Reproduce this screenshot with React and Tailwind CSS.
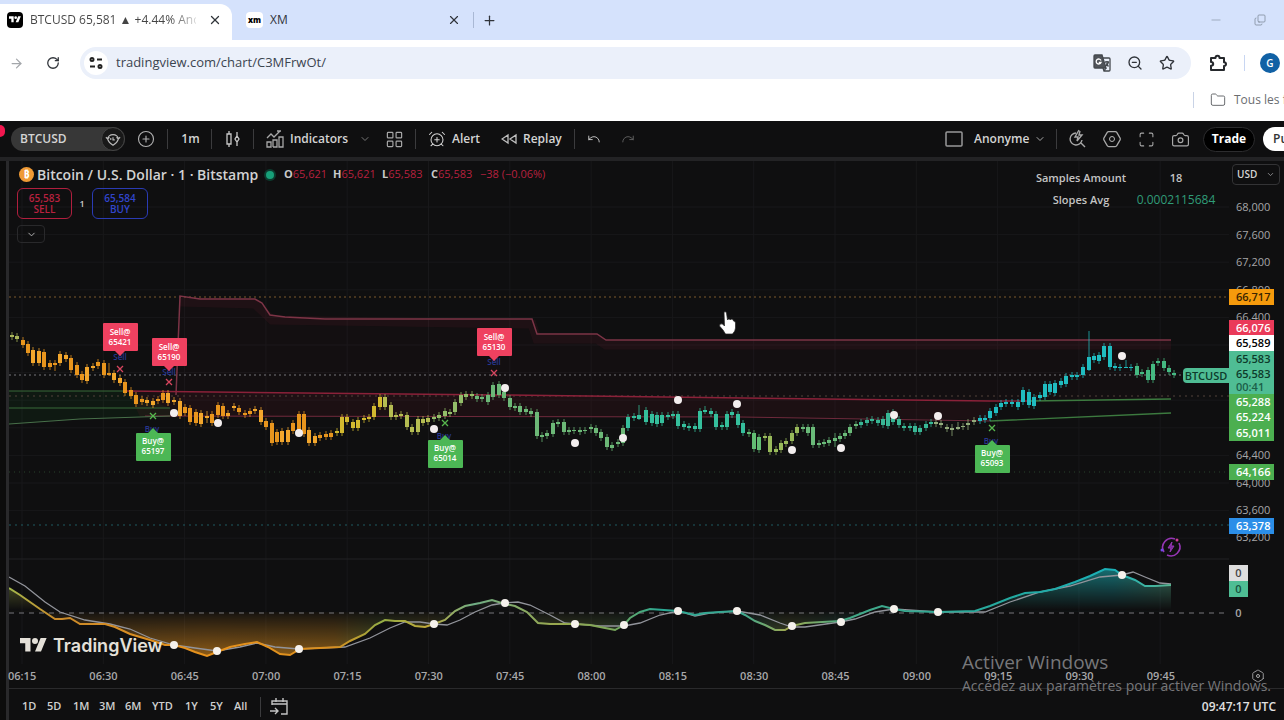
import React from "react";
import {
  AlarmClockPlus, ArrowRight, Camera, ChevronDown, Folder, Hexagon, LayoutGrid, Maximize,
  Minus, Plus, Redo, RotateCw, Search, Star, Undo, X, ZoomOut, Zap, CirclePlus, Copy,
} from "lucide-react";

/* x, body top, body bottom, optional wick top, wick bottom */
const CANDLES = [
  [12,335,337],[17,336,339],[23,340,345],[28,344,353],[33,350,363],[39,351,363],[44,352,367],[50,363,367],[55,363,365,360,371],
  [60,354,363],[66,355,359],[71,358,370],[77,365,375],[82,374,380],[87,367,381],[93,366,368],[98,362,366],[104,363,375],
  [109,373,375,363,376],[114,373,380],[120,378,383],[125,382,393],[131,390,396],[136,395,404],[142,399,402],[147,400,403],
  [153,401,405],[158,399,401],[163,393,400],[168,393,403],[174,400,402],[180,401,416],[185,407,413],[190,408,422],[196,412,423],
  [201,413,424],[207,416,418,411,423],[212,414,423],[218,405,415],[223,406,416],[228,413,416],[234,406,408],[239,408,412],
  [245,413,415],[250,411,414],[255,409,411],[261,410,422],[266,421,427],[272,423,443],[277,432,442],[282,431,442],[288,430,442],
  [293,423,431],[299,414,430],[304,414,434],[309,430,443],[315,436,443],[320,435,438],[326,434,437],[331,433,437],[337,431,433],
  [342,417,433],[347,417,422],[353,422,428],[358,420,428],[364,418,420],[369,417,419],[374,406,417],[380,397,407],[385,397,407],
  [391,405,417],[396,415,417],[401,414,416],[407,415,427],[412,427,432],[418,419,432],[423,419,423],[428,418,422],[434,417,419],
  [439,415,418],[445,411,416],[450,412,414],[455,402,412],[461,395,403],[466,394,397],[472,394,396],[477,396,399],[482,397,399],
  [488,395,402],[493,385,397],[499,384,395],[504,392,398],[510,398,407],[515,406,408],[520,406,412],[526,409,412],[531,411,414],
  [537,412,436],[542,435,437,432,442],[547,433,436],[553,423,434],[558,422,424],[564,422,432],[569,430,432],[574,430,431],
  [580,430,432],[585,430,431],[591,427,429,424,433],[596,428,433],[601,432,438],[607,437,447],[612,445,448],[618,442,444],
  [623,428,443],[628,417,428],[634,416,418],[639,415,419,405,420],[646,410,422],[652,414,423],[657,415,424],[662,415,423],
  [668,415,417],[673,414,416],[678,414,426],[684,424,427],[689,426,428],[695,426,429],[700,411,429],[705,410,412,406,414],
  [711,411,414],[716,414,427],[722,425,427],[727,414,427],[732,412,415],[738,414,425],[743,423,433],[749,432,434],[754,433,449],
  [759,437,450],[765,436,438],[770,436,452],[776,449,452],[781,443,450],[786,441,444],[792,433,441],[797,427,433],[803,427,429],
  [808,427,433],[813,427,445],[819,443,445],[824,442,444],[829,440,443],[835,438,441,433,447],[840,436,439],[845,433,436],
  [850,427,433],[856,424,426],[861,422,425],[867,420,423],[872,419,421],[878,420,423],[883,419,425],[888,413,426],[893,412,422],
  [899,419,425],[904,426,428],[910,426,428],[915,426,432],[920,428,432],[926,424,428],[931,422,424],[936,422,424],[941,423,425],
  [947,427,429],[952,428,430,424,436],[958,427,429,422,430],[963,426,427],[968,423,425,419,430],[974,420,422],[980,418,421],
  [985,418,420],[990,411,418],[996,407,413],[1001,403,407],[1006,402,404],[1012,402,404],[1018,402,407],[1023,390,402],
  [1029,392,405],[1034,397,406],[1040,395,398],[1045,384,397],[1050,384,392],[1055,383,393],[1061,381,385],[1066,376,384],
  [1072,375,377],[1077,375,377],[1083,367,375],[1089,357,370,331,371],[1094,356,360],[1099,355,361],[1104,346,357],[1110,346,367],
  [1115,366,368],[1120,367,368],[1126,367,368,360,368],[1131,367,368],[1137,366,375],[1142,372,374],[1148,370,380],
  [1153,364,380],[1158,361,363],[1164,361,368],[1169,368,372],[1174,373,375],
];

const candleColor = (x) => {
  if (x < 22) return "#a9b45a";
  if (x < 335) return x % 3 ? "#e8951d" : "#f2a62c";
  if (x < 385) return "#d3b92f";
  if (x < 430) return "#b5bd52";
  if (x < 475) return "#93bd69";
  if (x < 625) return "#6cb877";
  if (x < 745) return "#35bf9c";
  if (x < 765) return "#62bd73";
  if (x < 800) return "#98b95a";
  if (x < 860) return "#6abb79";
  if (x < 935) return "#38b795";
  if (x < 975) return "#93ac7c";
  if (x < 1135) return "#20bcc0";
  return "#45b982";
};

const MAIN = "9,588 20,595 30,602 40,609 55,619 62,619 70,618 80,624 90,624 105,624 115,627 130,634 150,640 165,645 174,645 185,648 195,652 207,656 217,652 230,647 245,644 257,642 268,647 280,654 290,655 300,649 320,648 340,647 350,641 365,634 375,625 385,620 395,621 405,621 415,626 425,627 434,624 445,620 455,611 465,606 480,603 492,600 505,604 515,606 527,612 538,623 550,624 575,624 590,625 605,628 615,630 624,625 630,618 640,612 650,609 678,611 695,615 705,613 720,612 737,611 745,615 755,621 765,625 775,630 785,630 792,626 805,623 840,621 850,618 870,610 882,606 894,609 905,611 938,612 975,611 990,606 1010,598 1025,593 1040,592 1055,589 1075,582 1090,576 1105,569 1115,570 1122,575 1135,580 1145,586 1155,586 1171,585";
const SIGNAL = "9,577 25,586 45,602 60,612 85,620 110,624 130,629 150,638 174,645 195,648 217,651 240,647 257,643 275,647 299,649 320,648 345,647 370,638 390,628 405,622 420,622 434,624 447,625 460,620 475,612 492,605 504,603 518,602 530,605 550,615 565,623 600,626 624,626 640,623 660,615 678,611 695,616 710,613 737,611 760,615 780,623 792,627 805,627 840,622 855,619 875,612 894,609 938,612 985,612 1010,602 1040,592 1070,586 1100,577 1122,575 1133,572 1145,577 1160,583 1171,584";

const DOTS = [[174,413],[218,423],[299,433],[434,429],[505,388],[575,443],[623,438],[678,400],[737,404],[792,450],[841,448],[894,415],[938,416],[1122,356]];
const OSC_DOTS = [[174,645],[217,651],[299,649],[434,624],[505,603],[575,624],[624,625],[678,611],[737,611],[792,626],[841,622],[894,609],[938,612],[1122,575]];
const SELLS = [[120,323,"65421",369],[169,338,"65190",382],[494,328,"65130",373]];
const BUYS = [[153,433,"65197",416],[445,440,"65014",423],[992,445,"65093",428]];

const AXIS = [
  ["68,000", 207], ["67,600", 235], ["67,200", 262], ["66,800", 290], ["66,400", 317],
  ["64,400", 455], ["64,000", 483], ["63,600", 510], ["63,200", 537],
];
const TAGS = [
  ["66,717", 297, "bg-[#f59a0c] text-[#3a2400]"], ["66,076", 328, "bg-[#ea3a59] text-white"],
  ["65,589", 343, "bg-white text-black"], ["65,583", 359, "bg-[#4fbd94] text-[#0d3a2b]"],
  ["65,583", 374, "bg-[#4fbd94] text-[#0d3a2b]"], ["00:41", 387, "bg-[#4fbd94] text-[#1b5f49]"],
  ["65,288", 402, "bg-[#4caf50] text-white"], ["65,224", 417, "bg-[#4caf50] text-white"],
  ["65,011", 433, "bg-[#4caf50] text-white"], ["64,166", 472, "bg-[#4caf50] text-white"],
  ["63,378", 526, "bg-[#2b8ee8] text-white"],
];
const TIMES = ["06:15","06:30","06:45","07:00","07:15","07:30","07:45","08:00","08:15","08:30","08:45","09:00","09:15","09:30","09:45"];
const RANGES = [["1D","w-[25px]"],["5D","w-[26px]"],["1M","w-[26px]"],["3M","w-[26px]"],["6M","w-[27px]"],["YTD","w-[33px]"],["1Y","w-[25px]"],["5Y","w-[24px]"],["All","w-[26px]"]];

function Cross({ x, y, color }) {
  return <path d={`M${x - 3} ${y - 3}l6 6m0-6l-6 6`} stroke={color} strokeWidth="1.3" fill="none" />;
}

function ChartCanvas() {
  return (
    <svg viewBox="9 161 1220 503" preserveAspectRatio="none" className="block h-full w-full" role="img" aria-label="BTCUSD price chart">
      <defs>
        <linearGradient id="hue" gradientUnits="userSpaceOnUse" x1="9" y1="0" x2="1171" y2="0">
          <stop offset="0" stopColor="#a3b84c" />
          <stop offset="0.04" stopColor="#c98a2a" />
          <stop offset="0.17" stopColor="#e8921c" />
          <stop offset="0.28" stopColor="#d98f1e" />
          <stop offset="0.32" stopColor="#94ad45" />
          <stop offset="0.36" stopColor="#c0a93a" />
          <stop offset="0.4" stopColor="#6fae86" />
          <stop offset="0.47" stopColor="#9aa84e" />
          <stop offset="0.52" stopColor="#7aa85a" />
          <stop offset="0.56" stopColor="#2aa893" />
          <stop offset="0.63" stopColor="#3aa892" />
          <stop offset="0.67" stopColor="#a1a84f" />
          <stop offset="0.72" stopColor="#45a987" />
          <stop offset="0.86" stopColor="#23a9a0" />
          <stop offset="0.95" stopColor="#1bb1b8" />
          <stop offset="1" stopColor="#58b591" />
        </linearGradient>
        <linearGradient id="fade" gradientUnits="userSpaceOnUse" x1="0" y1="569" x2="0" y2="656">
          <stop offset="0" stopColor="#fff" />
          <stop offset="0.47" stopColor="#000" />
          <stop offset="0.53" stopColor="#222" />
          <stop offset="1" stopColor="#fff" />
        </linearGradient>
        <mask id="oscMask" maskUnits="userSpaceOnUse" x="9" y="560" width="1220" height="104">
          <rect x="9" y="560" width="1220" height="104" fill="url(#fade)" />
        </mask>
      </defs>

      <g stroke="#18181a">
        {Array.from({ length: 13 }, (_, i) => <path key={i} d={`M9 ${207 + i * 27.6}H1229`} />)}
        {Array.from({ length: 15 }, (_, i) => <path key={i} d={`M${22 + i * 81.3} 161V664`} />)}
      </g>
      <path d="M9 559H1229" stroke="#222224" />

      <path d="M180 296L255 299L272 316L532 319L537 334H597L606 340H1171V400H178Z" fill="#f23655" opacity="0.02" />
      <path d="M180 302L255 304L272 320L532 324L537 339H597L606 345H1171" fill="none" stroke="#e8304f" strokeWidth="9" opacity="0.06" />
      <path d="M128 391L500 395L990 401V420L740 417H140Z" fill="#f2204a" opacity="0.06" />
      <path d="M9 391H125L170 408V416L80 419L9 424Z" fill="#1fa83c" opacity="0.07" />

      <g fill="none">
        <path d="M9 297H1229" stroke="#7d5a2c" strokeDasharray="2 3" />
        <path d="M9 375H1184" stroke="#77777a" strokeDasharray="2 3" />
        <path d="M9 396H1229" stroke="#52433a" strokeDasharray="2 4" />
        <path d="M9 472H1229" stroke="#29432b" strokeDasharray="1 4" />
        <path d="M9 525H1229" stroke="#1f5a61" strokeDasharray="2 4" />
        <path d="M176 395L180 296L200 299H255L262 303L270 315L285 317L325 319H532L537 334H597L606 340H1171" stroke="#7c3446" strokeWidth="1.5" />
        <path d="M125 391L500 395L990 401H1030" stroke="#8b2139" strokeWidth="1.5" />
        <path d="M145 416L740 417L990 421" stroke="#6f2a3c" />
        <path d="M9 391H125" stroke="#386b38" />
        <path d="M9 408H170" stroke="#386b38" />
        <path d="M9 424L80 419L170 416" stroke="#48704a" />
        <path d="M1030 401L1171 399M990 421L1171 413" stroke="#3c7a3f" strokeWidth="1.3" />
      </g>

      {CANDLES.map(([x, top, bottom, high, low]) => (
        <g key={x} fill={candleColor(x)}>
          <rect x={x - 0.5} y={high ?? top - 3} width="1" height={(low ?? bottom + 3) - (high ?? top - 3)} opacity="0.75" />
          <rect x={x - 2} y={top} width="4" height={bottom - top} />
        </g>
      ))}

      <g fontFamily="Open Sans, sans-serif" fontSize="8" fontWeight="600" textAnchor="middle">
        {SELLS.map(([x, y, price, cross]) => (
          <g key={x}>
            <text x={x} y={y + 37} fill="#27368f">Sell</text>
            <path d={`M${x - 16} ${y}h33q1 0 1 1v26q0 1-1 1h-12l-5 5l-5-5h-11q-1 0-1-1v-26q0-1 1-1z`} fill="#ef4160" />
            <text x={x} y={y + 12} fill="#fff">Sell@</text>
            <text x={x} y={y + 22} fill="#fff">{price}</text>
            <Cross x={x} y={cross} color="#d8465f" />
          </g>
        ))}
        {BUYS.map(([x, y, price, cross]) => (
          <g key={x}>
            <text x={x - 1} y={y - 1} fill="#27368f">Buy</text>
            <path d={`M${x - 16} ${y}h11l5-5l5 5h12q1 0 1 1v26q0 1-1 1h-33q-1 0-1-1v-26q0-1 1-1z`} fill="#4cb755" />
            <text x={x} y={y + 11} fill="#fff">Buy@</text>
            <text x={x} y={y + 21} fill="#fff">{price}</text>
            <Cross x={x} y={cross} color="#57b84e" />
          </g>
        ))}
      </g>
      {DOTS.map(([x, y]) => <circle key={x} cx={x} cy={y} r="4" fill="#f3eeee" />)}

      <path d={`M9 612L${MAIN.split(" ").join("L")}L1171 612Z`} fill="url(#hue)" opacity="0.58" mask="url(#oscMask)" />
      <path d="M9 613H1229" stroke="#77777a" strokeDasharray="5 5" />
      <polyline points={SIGNAL} fill="none" stroke="#92949b" strokeWidth="1.3" />
      <polyline points={MAIN} fill="none" stroke="url(#hue)" strokeWidth="2" />
      {OSC_DOTS.map(([x, y]) => <circle key={x} cx={x} cy={y} r="4" fill="#f5f1ec" />)}

      <g transform="translate(1171 547)" fill="none" stroke="#9536b4" strokeWidth="1.6">
        <path d="M-7 5A9 9 0 0 1 4 -8M8 -4A9 9 0 0 1 -4 8" />
        <path d="M1 -5L-3 1H0L-1 5L3 -1H0Z" fill="#7a2a9a" strokeWidth="1" />
        <circle cx="-9" cy="3" r="1.5" fill="#7449ea" stroke="none" />
        <circle cx="6" cy="-7" r="1.5" fill="#d23b9b" stroke="none" />
      </g>

      <path d="M724 312q2-1 2.500 1l1 7l1-1q2 0 2 1l1-1q2 0 2 2q2 0 2 2v5q0 3-3 6h-7q-2-4-6-8q0-3 3-2l2 2z" fill="#fff" stroke="#222" strokeWidth="0.700" />
    </svg>
  );
}

const Divider = () => <span className="h-5 w-px shrink-0 bg-[#3b3b3d]" />;

function BrowserBars() {
  return (
    <header className="shrink-0 bg-white text-[#30343a]">
      <div className="flex h-10 items-stretch bg-[#d5e2fc]">
        <div className="mt-1 flex w-[232px] items-center rounded-tr-xl bg-white pb-1 pl-[7px]">
          <span className="grid size-4 place-items-center rounded bg-black">
            <svg viewBox="0 0 36 28" className="w-3 fill-white"><path d="M14 22H7V11H0V4h14v18zM28 22h-8l7.500-18h8L28 22z" /><circle cx="20" cy="8" r="4" /></svg>
          </span>
          <span className="ml-[7px] w-[166px] overflow-hidden bg-linear-to-r from-[#444] from-85% to-[#44444430] bg-clip-text text-xs whitespace-nowrap text-transparent">BTCUSD 65,581 ▲ +4.44% Ano</span>
          <button aria-label="Close tab" className="ml-3"><X size={14} strokeWidth={2.2} /></button>
        </div>
        <div className="flex w-[241px] items-center pl-[14px]">
          <span className="grid h-4 w-[17px] place-items-center rounded-sm bg-white text-[8px] font-black text-black">xm</span>
          <span className="ml-[7px] flex-1 text-xs">XM</span>
          <button aria-label="Close tab" className="mr-3"><X size={14} /></button>
        </div>
        <div className="flex items-center gap-2">
          <span className="h-4 w-px bg-[#a9b8d4]" />
          <button aria-label="New tab"><Plus size={15} /></button>
        </div>
        <div className="ml-auto flex items-center gap-[31px] pr-[18px] text-[#7b8796]">
          <button aria-label="Minimize"><Minus size={14} strokeWidth={1} /></button>
          <button aria-label="Restore"><Copy size={12} strokeWidth={1.5} className="-scale-x-100 rotate-180" /></button>
        </div>
      </div>
      <div className="flex h-[46px] items-center">
        <button aria-label="Forward" className="ml-[9px] text-[#a4a7ab]"><ArrowRight size={15} /></button>
        <button aria-label="Reload" className="ml-[22px]"><RotateCw size={14} strokeWidth={2.200} /></button>
        <div className="ml-5 flex h-8 flex-1 items-center rounded-full bg-[#ebf0fa] pl-1">
          <span className="grid size-6 place-items-center rounded-full bg-white">
            <svg viewBox="0 0 16 16" className="size-4 fill-none stroke-[#222] stroke-2"><circle cx="4" cy="4.500" r="1.500" /><path d="M9 4.500h5M2 11.500h5" /><circle cx="12" cy="11.500" r="1.500" /></svg>
          </span>
          <input aria-label="Address" defaultValue="tradingview.com/chart/C3MFrwOt/" className="ml-2 min-w-0 flex-1 bg-transparent text-[13px] text-[#3b4450] outline-none" />
          <div className="flex items-center gap-4 pr-4">
            <button aria-label="Translate">
              <svg viewBox="0 0 18 18" className="size-[18px] fill-none stroke-[#44484d] stroke-[1.300]">
                <path d="M2 1h7l4 13H2q-1 0-1-1V2q0-1 1-1z" fill="#50545a" />
                <path d="M10 4h6q1 0 1 1v11q0 1-1 1h-5l-1-3M13 14l-2 3" />
                <path d="M8 6.500a2.500 2.500 0 1 0 0 2H5.800" stroke="#fff" />
                <path d="M12 8h4M14 7v1M15.500 8q-.5 2.500-3 4M13 9.500l2.500 3" />
              </svg>
            </button>
            <button aria-label="Zoom"><ZoomOut size={16} /></button>
            <button aria-label="Bookmark"><Star size={16} /></button>
          </div>
        </div>
        <button aria-label="Extensions" className="ml-[18px]">
          <svg viewBox="0 0 18 18" className="size-[18px] fill-none stroke-[#26292d] stroke-2"><path d="M2 4h4.500q0-2.200 2-2.200t2 2.200H15v4.200q2 .1 2 1.900t-2 1.900V16H2v-4.200q2.200-.2 2.200-1.900T2 8z" strokeLinejoin="round" /></svg>
        </button>
        <span className="ml-[17px] h-4 w-px bg-[#c8d6f2]" />
        <button aria-label="Profile" className="mr-1 ml-[15px] grid size-5 place-items-center rounded-full bg-[#1161a5] text-[10px] font-semibold text-white">G</button>
      </div>
      <div className="flex h-[35px] items-start justify-end overflow-hidden pt-1.5 text-xs text-[#6a6d70]">
        <span className="h-4 w-px bg-[#c9d3e6]" />
        <a href="#bookmarks" className="ml-4 flex w-[74px] items-center gap-2 overflow-hidden whitespace-nowrap"><Folder size={16} strokeWidth={1.500} className="shrink-0" />Tous les f</a>
      </div>
    </header>
  );
}

function Toolbar() {
  return (
    <div className="flex h-10 shrink-0 items-center overflow-hidden border-b-4 border-[#232325] text-xs font-semibold whitespace-nowrap text-[#d4d4d4]">
      <span className="-mt-4 h-3 w-[5px] shrink-0 rounded-r-full bg-[#f2174f]" />
      <button className="ml-1.5 flex h-6 w-[114px] shrink-0 items-center justify-between rounded-full bg-[#373737] pl-[9px]">
        BTCUSD
        <span className="grid size-6 place-items-center rounded-full border border-[#444] bg-[#191919]">
          <svg viewBox="0 0 18 18" className="size-4 fill-none stroke-[#bbb] stroke-[1.300]"><path d="M3 9a6 5 0 0 1 12 0q-1 4-6 7q-5-3-6-7zM1 7l2 2l2-2M13 7l2 2l2-2M6.500 8v2M9 7v3h2" /></svg>
        </span>
      </button>
      <button aria-label="Compare" className="ml-3 text-[#b0b0b0]"><CirclePlus size={18} strokeWidth={1.500} /></button>
      <div className="ml-3 flex shrink-0 items-center">
        <Divider />
        <button className="w-[43px] pl-0.5">1m</button>
        <Divider />
        <button aria-label="Candles" className="grid w-[41px] place-items-center">
          <svg viewBox="0 0 16 18" className="h-[18px] w-4 fill-none stroke-[#c8c8c8] stroke-[1.300]"><path d="M4 1v3M4 14v3M2 4h4v10H2zM12 2v4M12 12v4M12 6l2 3l-2 3l-2-3z" /></svg>
        </button>
        <Divider />
        <button className="ml-3 flex w-[87px] items-center gap-1.5">
          <svg viewBox="0 0 18 18" className="size-[18px] fill-none stroke-[#a8a8a8] stroke-[1.300]"><path d="M1 8l4-4l3 3l6-6M11 1h4M1 16v-4h4v5H1zM7 17v-7h4v7H7M13 17V7h4v10z" /></svg>
          Indicators
        </button>
        <button aria-label="Indicator menu" className="ml-1.5 text-[#777]"><ChevronDown size={12} /></button>
        <button aria-label="Templates" className="ml-3.5 text-[#a8a8a8]"><LayoutGrid size={19} strokeWidth={1.500} /></button>
      </div>
      <div className="ml-[11px] flex shrink-0 items-center">
        <Divider />
        <button className="ml-3 flex w-[73px] items-center gap-1.5"><AlarmClockPlus size={18} strokeWidth={1.400} />Alert</button>
        <button className="flex w-[73px] items-center gap-1.5">
          <svg viewBox="0 0 16 12" className="h-3 w-4 fill-none stroke-[#c0c0c0] stroke-[1.300]"><path d="M7 2v8L1 6zM15 2v8L9 6z" /></svg>
          Replay
        </button>
        <Divider />
        <button aria-label="Undo" className="ml-3"><Undo size={14} strokeWidth={1.500} /></button>
        <button aria-label="Redo" className="ml-5 text-[#666]"><Redo size={14} strokeWidth={1.500} /></button>
      </div>
      <div className="ml-auto flex shrink-0 items-center text-[#a8a8a8]">
        <button aria-label="Layout"><svg viewBox="0 0 20 18" className="h-[18px] w-5 fill-none stroke-[#999] stroke-[1.500]"><rect x="2" y="2" width="16" height="14" rx="1" /></svg></button>
        <button className="ml-2.5 w-[54px] text-left text-[#d4d4d4]">Anonyme</button>
        <button aria-label="Layout menu" className="mr-2.5 ml-1.5"><ChevronDown size={12} /></button>
        <Divider />
        <button aria-label="Quick search" className="ml-2.5">
          <svg viewBox="0 0 20 20" className="size-5 fill-none stroke-[#a8a8a8] stroke-[1.400]"><path d="M9 4a6 6 0 1 0 6 7M14 14l4 4M12 1L8 8h3l-1 4l5-6h-3l1-4" /></svg>
        </button>
        <button aria-label="Settings" className="relative ml-[15px] grid place-items-center"><Hexagon size={20} strokeWidth={1.500} className="rotate-90" /><span className="absolute size-1.5 rounded-full border border-[#b5b5b5]" /></button>
        <button aria-label="Fullscreen" className="ml-4"><Maximize size={17} strokeWidth={1.500} /></button>
        <button aria-label="Snapshot" className="ml-4"><Camera size={19} strokeWidth={1.500} /></button>
        <button className="ml-[13px] h-[25px] w-[52px] rounded-full border border-[#2c2c2e] bg-black font-bold text-white">Trade</button>
        <button className="ml-2 h-6 w-[21px] overflow-hidden rounded-l-full bg-white pl-2.5 text-left text-[#333]">Pu</button>
      </div>
    </div>
  );
}

function Legend() {
  return (
    <>
      <div className="absolute top-1.5 left-2.5 flex flex-col">
        <div className="flex h-[15px] items-center whitespace-nowrap">
          <span className="grid size-[15px] place-items-center rounded-full bg-[#ef9a35] text-[10px] font-bold text-white">₿</span>
          <h1 className="ml-[3px] w-[223px] text-sm font-semibold text-[#d2d2d2]">Bitcoin / U.S. Dollar · 1 · Bitstamp</h1>
          <span className="ml-1.5 size-2 rounded-full bg-[#17a079] ring-2 ring-[#0d3b2e]" />
          <p className="ml-2.5 flex gap-1 text-[11px] text-[#b7213f]">
            {[["O", "65,621"], ["H", "65,621"], ["L", "65,583"], ["C", "65,583"]].map(([k, v]) => <span key={k} className="w-[45px]"><b className="text-[#c9c9c9]">{k}</b>{v}</span>)}
            <span>−38 (−0.06%)</span>
          </p>
        </div>
        <div className="mt-1.5 -ml-0.5 flex items-center text-[10px] leading-[11px] font-semibold">
          <button className="h-[31px] w-[55px] rounded-md border border-[#b01f3e] text-[#b8213f]">65,583<br />SELL</button>
          <span className="w-5 text-center text-[9px] text-[#ccc]">1</span>
          <button className="h-[31px] w-14 rounded-md border border-[#2a3bb4] text-[#3145cc]">65,584<br />BUY</button>
        </div>
        <button aria-label="Collapse legend" className="mt-1.5 -ml-0.5 grid h-[18px] w-7 place-items-center rounded-sm border border-[#29292b] text-[#bbb]"><ChevronDown size={11} /></button>
      </div>
      <table className="absolute top-1.5 right-1.5 text-[11px] font-semibold text-[#c4c4c4]">
        <tbody>
          <tr className="h-[22px]"><th className="w-[96px] font-semibold whitespace-nowrap">Samples Amount</th><td className="w-[94px] text-center">18</td></tr>
          <tr className="h-[22px]"><th className="font-semibold">Slopes Avg</th><td className="text-center text-xs font-normal text-[#2f9c78]">0.0002115684</td></tr>
        </tbody>
      </table>
      <div className="absolute bottom-2 left-[11px] flex items-center gap-1.5 text-[#e4e0d8]">
        <svg viewBox="0 0 36 28" className="h-[21px] w-[27px] fill-current"><path d="M14 22H7V11H0V4h14v18zM28 22h-8l7.500-18h8L28 22z" /><circle cx="20" cy="8" r="4" /></svg>
        <span className="font-['Inter',sans-serif] text-lg leading-5 font-semibold">TradingView</span>
      </div>
    </>
  );
}

function PriceAxis() {
  return (
    <div className="relative w-[55px] shrink-0 text-[11px] leading-[15px] text-[#a6a6a8]">
      <label className="sr-only" htmlFor="currency">Currency</label>
      <div className="absolute top-[3px] left-[3px] flex h-[21px] w-12 items-center rounded-sm border border-[#333335] pr-1">
        <select id="currency" className="min-w-0 flex-1 appearance-none bg-[#0f0f10] pl-1 text-[10px] font-semibold text-[#d5d5d5]"><option>USD</option></select>
        <ChevronDown size={9} />
      </div>
      {AXIS.map(([label, y]) => <span key={label} className="absolute left-[7px]" style={{ top: y - 169 }}>{label}</span>)}
      {TAGS.map(([label, y, tone]) => <span key={y} className={`absolute left-0 h-4 w-[45px] pl-[7px] font-semibold ${tone}`} style={{ top: y - 169 }}>{label}</span>)}
      <span className="absolute top-[207px] -left-[46px] h-[15px] w-[46px] rounded-l-sm bg-[#4fbd94] text-center font-semibold text-[#0d3a2b]">BTCUSD</span>
      <div className="absolute top-[404px] left-0 w-[19px] text-center font-semibold">
        <p className="h-4 bg-[#dedede] text-[#444]">0</p>
        <p className="h-4 bg-[#4fbd94] text-[#17503d]">0</p>
        <p className="mt-2">0</p>
      </div>
    </div>
  );
}

export default function App() {
  return (
    <div className="relative flex h-screen min-h-[600px] w-full flex-col overflow-hidden bg-[#0f0f10] font-['Open_Sans','Noto_Sans',sans-serif]">
      <BrowserBars />
      <Toolbar />
      <main className="flex min-h-0 flex-1">
        <div className="w-[9px] shrink-0 border-r-3 border-[#29292b] bg-[#0c0c0c]" />
        <div className="flex min-w-0 flex-1 flex-col">
          <div className="flex min-h-0 flex-1">
            <section className="relative min-w-0 flex-1">
              <ChartCanvas />
              <Legend />
            </section>
            <PriceAxis />
          </div>
          <div className="flex h-[25px] shrink-0 items-center border-b border-[#2a2a2c] text-[11px] font-semibold text-[#a8a8aa]">
            <div className="-ml-px flex flex-1 justify-between">
              {TIMES.map((t) => <span key={t} className="w-7 text-center">{t}</span>)}
            </div>
            <button aria-label="Axis settings" className="relative mr-[19px] ml-[76px] grid place-items-center"><Hexagon size={14} strokeWidth={1.500} /><span className="absolute size-1 rounded-full border border-[#aaa]" /></button>
          </div>
          <footer className="flex h-[31px] shrink-0 items-center pt-1 pr-2 pl-[13px] text-xs font-semibold text-[#cfcfcf]">
            {RANGES.map(([r, w]) => <button key={r} className={`${w} shrink-0 text-left text-[11px]`}>{r}</button>)}
            <Divider />
            <button aria-label="Go to date" className="ml-2">
              <svg viewBox="0 0 20 20" className="size-5 fill-none stroke-[#c4c4c4] stroke-[1.400]"><path d="M3 8V4h15v13h-6M3 7h15M7 1v4M14 1v4M1 14h8M6 11l3 3l-3 3" /></svg>
            </button>
            <span className="ml-auto text-[#e0e0e0]">09:47:17 UTC</span>
          </footer>
        </div>
      </main>
      <aside className="pointer-events-none absolute right-2 bottom-6 w-[314px] whitespace-nowrap text-[#77777a]">
        <p className="text-[19px] leading-7">Activer Windows</p>
        <p className="text-sm leading-5">Accédez aux paramètres pour activer Windows.</p>
      </aside>
    </div>
  );
}
